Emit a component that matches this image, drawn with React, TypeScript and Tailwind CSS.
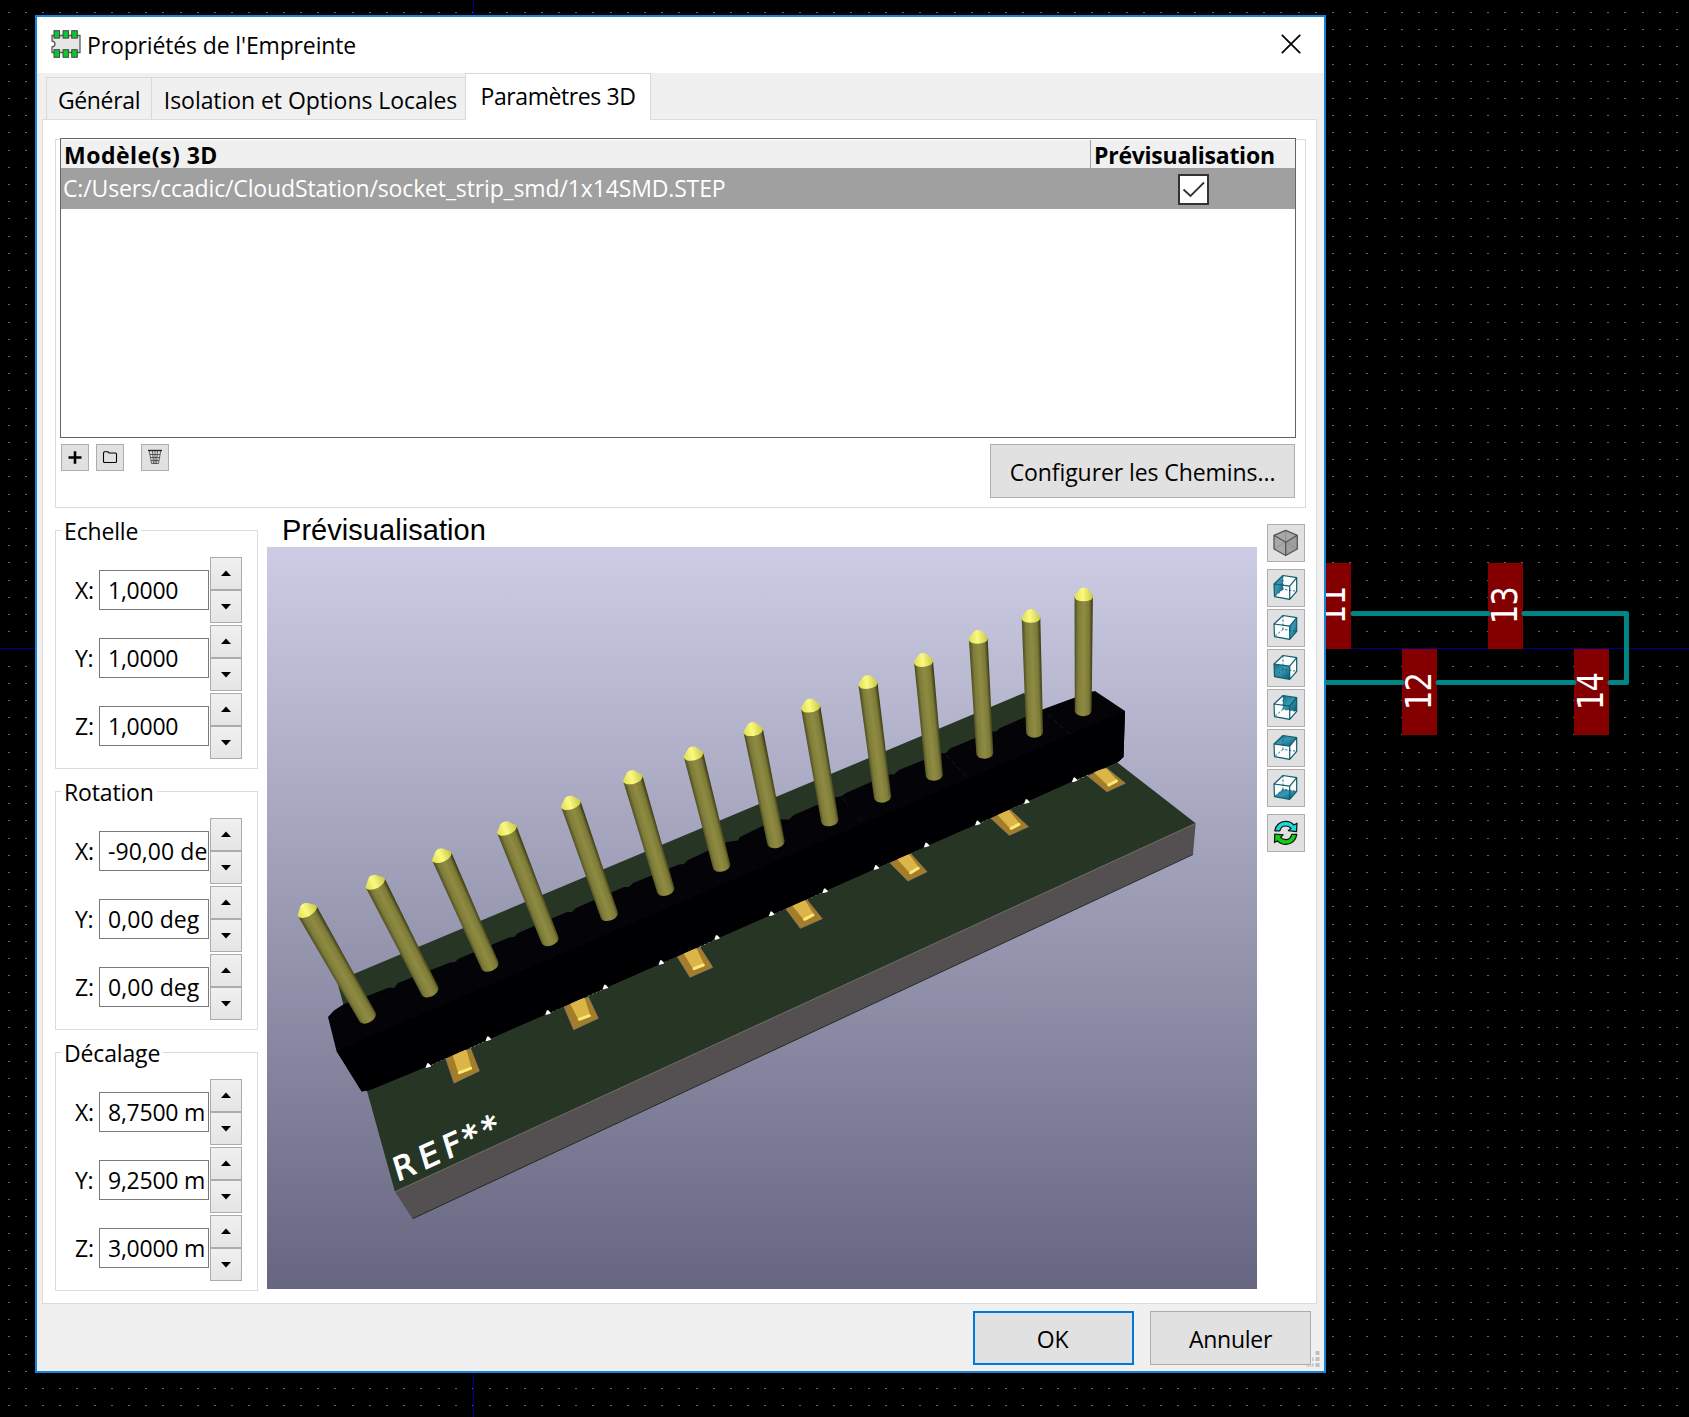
import type { ReactNode } from "react";

const PITCH = 17.2;

function gridDots() {
  let d = "";
  for (let r = 0; r < 83; r++) {
    const y = Math.floor(12.5 + r * PITCH);
    for (let c = 0; c < 99; c++) {
      const x = Math.floor(8 + c * PITCH);
      d += `M${x} ${y}h2v1h-2z`;
    }
  }
  return d;
}

function BoardCanvas() {
  const pads = [
    { x: 1316, y: 563, n: "11" },
    { x: 1402, y: 649, n: "12" },
    { x: 1488, y: 563, n: "13" },
    { x: 1574, y: 649, n: "14" },
  ];
  return (
    <svg className="absolute inset-0" width="1689" height="1417" viewBox="0 0 1689 1417">
      <rect width="1689" height="1417" fill="#000" />
      <path d={gridDots()} fill="#666" />
      <path d="M0 648.5H1689M473.5 0V1417" stroke="#000084" strokeWidth="1" />
      {pads.map((p) => (
        <rect key={p.n} x={p.x} y={p.y} width="35" height="86" fill="#840000" />
      ))}
      <path
        d="M1353 613.5H1488M1524 613.5H1626.5V682.5H1610M1574 682.5H1438M1402 682.5H1320"
        fill="none"
        stroke="#008484"
        strokeWidth="5"
        strokeLinecap="round"
        strokeLinejoin="round"
      />
      {pads.map((p) => (
        <text
          key={p.n}
          transform={`translate(${p.x + 29} ${p.y + 61.5}) rotate(-90)`}
          fontFamily="'DejaVu Sans Mono', monospace"
          fontSize="35"
          textLength="38"
          lengthAdjust="spacingAndGlyphs"
          fill="#fff"
        >
          {p.n}
        </text>
      ))}
    </svg>
  );
}

/* shoulder x, shoulder y, base x, base y */
const PINS = [
  [307.5, 911.5, 367.5, 1017],
  [375.5, 883.5, 430, 991],
  [442, 857, 490, 965.5],
  [507, 830, 550, 940],
  [571, 804.5, 609.3, 915],
  [633, 779, 665.7, 890],
  [693.7, 755.5, 721.6, 866],
  [753.3, 731, 776, 842.5],
  [810.7, 707.5, 829.8, 820.5],
  [868, 684, 882.6, 797],
  [923.6, 662, 934.3, 775],
  [978.3, 639, 984.8, 753],
  [1031, 618, 1034.6, 732],
  [1083.7, 596.5, 1083.2, 710.5],
];

const PADS = [
  ["445.7,1058.3 470.7,1048.7 479.3,1071 454,1083", "453.3,1054 465.7,1050.7 470.7,1068.3 459.3,1072.7"],
  ["564,1006.7 588.3,997 598.3,1018.3 573.7,1029.7", "570.7,1002.7 584,999 589.3,1015.7 579.3,1019.3"],
  ["677.3,956.7 700,947.3 712.7,967.3 690,977.3", "684.3,952.7 696,949.3 703.3,965 694,968.7"],
  ["785.4,908.3 807.2,900 822.2,918.7 800.4,928.3", "792.3,904 804.6,901.3 813,915 804.6,919.3"],
  ["889.9,862.7 911,854 927,871.7 907.9,881", "897.2,857.7 908.7,855.3 918.2,868.3 910.6,872.7"],
  ["990.9,818.3 1010.5,810 1028.4,826.7 1009.3,835.3", "998.2,814 1008.5,811 1018.9,824.3 1011.2,828.3"],
  ["1087.8,776 1106.9,768.3 1125.3,783.3 1106.9,791.7", "1094.7,771.7 1105.7,769.3 1116.5,781 1108.8,785"],
];

const GAPS = [
  [428, 1065.7], [488, 1039], [547.7, 1012.7], [605, 987.3], [661, 962.7], [716.7, 937.7],
  [771.3, 914], [824.8, 891], [876, 867.7], [926.3, 845.3], [977.5, 823.3], [1026.5, 801.7], [1074.4, 780],
];

const HEADER_OUTLINE =
  "328,1017 334,1010.5 344,1004 370,995 389,987.5 394,988 398,983 450,962.5 455,962 459,958.5 509,937.5 514,937 518,933 567,912 572,912 576,908 624,887 629,887 633,883 679,864.5 684,864 688,860 727,842 738,840.5 740,837 776,819.5 789,819.5 794,815 834,797.5 841,796.5 846,793 888,774.5 894,774.5 899,770 940,753.5 946,753 950,748.5 991,731.5 996,731.5 1000,728 1045,708.5 1090,692 1095,691 1125,711 1123.5,757 1118,762 1074,780.5 978,823.5 875,868.5 771,915 717,938 661,963.5 605,988 548,1013.5 488,1039.5 428,1066 370,1090 361.7,1091.5 336.5,1051";

function Pin({ p, index }: { p: number[]; index: number }) {
  const [sx, sy, bx, by] = p;
  const len = Math.hypot(sx - bx, sy - by);
  const angle = (Math.atan2(sx - bx, by - sy) * 180) / Math.PI;
  const t = 10.9 - index * 0.11;
  const b = 9.2 - index * 0.06;
  return (
    <g transform={`translate(${bx} ${by}) rotate(${angle})`}>
      <path d={`M${-t + 0.3} ${-len}L${-b} 0C-8 7.5 8 7.5 ${b} 0L${t - 0.3} ${-len}Z`} fill="url(#pinBody)" />
      <path
        d={`M${-t} ${-len - 1}L-3.6 ${-len - 8}Q0 ${-len - 10} 3.6 ${-len - 8}L${t} ${-len - 1}Q${t} ${-len + 1.5} 7.5 ${-len + 3.2}Q0 ${-len + 6.5} -7.5 ${-len + 3.2}Q${-t} ${-len + 1.5} ${-t} ${-len - 1}Z`}
        fill="url(#pinCap)"
      />
    </g>
  );
}

function Scene() {
  return (
    <svg className="block" width="990" height="742" viewBox="267 547 990 742">
      <defs>
        <linearGradient id="sky" x1="0" y1="0" x2="0" y2="1">
          <stop offset="0" stopColor="#cccce5" />
          <stop offset="1" stopColor="#666680" />
        </linearGradient>
        <linearGradient id="pinBody">
          <stop offset="0" stopColor="#4a4a1e" />
          <stop offset="0.2" stopColor="#7e7c3a" />
          <stop offset="0.5" stopColor="#8f8b42" />
          <stop offset="0.8" stopColor="#7c7a38" />
          <stop offset="1" stopColor="#34340f" />
        </linearGradient>
        <linearGradient id="pinCap">
          <stop offset="0" stopColor="#dedc54" />
          <stop offset="0.45" stopColor="#fafa80" />
          <stop offset="1" stopColor="#c8c648" />
        </linearGradient>
      </defs>
      <rect x="267" y="547" width="990" height="742" fill="url(#sky)" />
      <polygon points="337,981 1024,693 1030,700 1040,712 1118,763 1196,823.5 395,1192 367,1091" fill="#263524" />
      <polygon points="395,1191.7 1195.7,823.3 1193,854.3 412.6,1218.7" fill="#544f50" />
      <path d="M395 1191.7L1195.7 823.3" stroke="#7a7674" strokeWidth="0.8" />
      <path d="M412.6 1218.7L1193 854.5" stroke="#1f2c22" strokeWidth="1" />
      {PADS.map(([pad, chip]) => (
        <g key={pad}>
          <polygon points={pad} fill="#a47d28" stroke="#8a7a70" strokeWidth="0.8" />
          <polygon points={chip} fill="#dcb548" stroke="#dcb548" strokeWidth="2" strokeLinejoin="round" />
          <polyline points={chip.split(" ").slice(2).join(" ")} fill="none" stroke="#fae878" strokeWidth="3" strokeLinecap="round" />
        </g>
      ))}
      <path
        d="M428 1066L446 1058M470 1048L488 1039.7M548 1013.5L564 1006M588 996L605 988M661 963.5L677 956M700 946.5L717 938.5M771 915L786 908M807 899L825 891M875 868.7L890 862M911 853L926 845.5M978 824L991 817.5M1010 809L1026 802M1074 781L1088 775"
        fill="none"
        stroke="#dfe6df"
        strokeWidth="1"
        strokeDasharray="1.5 3"
      />
      <polygon points={HEADER_OUTLINE} fill="#030308" />
      <polygon points="336.5,1051 1125,711 1123.5,757 1118,762 1074,780.5 978,823.5 661,963.5 428,1066 370,1090 361.7,1091.5" fill="#000002" />
      <path d="M946 755L968 778M1048 715L1070 734M843 798L848 806M859 817L863 822" stroke="#111118" strokeWidth="1.2" strokeDasharray="5 3" />
      {GAPS.map(([x, y]) => (
        <path key={x} d={`M${x - 2.5} ${y + 2}L${x - 0.8} ${y - 2.5}H${x + 0.6}L${x + 3} ${y}V${y + 0.8}L${x - 1} ${y + 2}Z`} fill="#fff" />
      ))}
      {PINS.map((p, i) => (
        <Pin key={p[0]} p={p} index={i} />
      ))}
      <text
        transform="matrix(0.913 -0.41 0.29 0.955 399 1181)"
        x="-2 26.5 52.5 74.5 95.5"
        y="0"
        fontFamily="'DejaVu Sans', sans-serif"
        fontSize="32"
        fill="#fff"
        stroke="#fff"
        strokeWidth="1"
      >
        REF**
      </text>
    </svg>
  );
}

const V = {
  ftl: "7,15",
  ftr: "22.7,17.2",
  fbr: "22.7,30.3",
  fbl: "7.5,27.6",
  btl: "16,6.5",
  btr: "29.7,8.7",
  bbr: "29.7,22.3",
  bbl: "16,20.3",
};

const FACES: { name: string; points: string }[] = [
  { name: "left", points: `${V.ftl} ${V.btl} ${V.bbl} ${V.fbl}` },
  { name: "right", points: `${V.ftr} ${V.btr} ${V.bbr} ${V.fbr}` },
  { name: "front", points: `${V.ftl} ${V.ftr} ${V.fbr} ${V.fbl}` },
  { name: "back", points: `${V.btl} ${V.btr} ${V.bbr} ${V.bbl}` },
  { name: "top", points: `${V.ftl} ${V.btl} ${V.btr} ${V.ftr}` },
  { name: "bottom", points: `${V.fbl} ${V.bbl} ${V.bbr} ${V.fbr}` },
];

function ToolButton({ children, label }: { children: ReactNode; label: string }) {
  return (
    <button aria-label={label} className="h-[38px] w-[38px] shrink-0 border border-[#adadad] bg-[#e1e1e1]">
      <svg className="-ml-px -mt-px block" width="38" height="38" viewBox="0 0 38 38">
        {children}
      </svg>
    </button>
  );
}

function ViewToolbar() {
  return (
    <div className="ml-[10px] mt-4 flex w-[38px] flex-col">
      <ToolButton label="iso">
        <path d="M18.7 6.3L30.3 11.3V25L18.7 31.5L7 25V11.3Z" fill="#a8a8a8" />
        <path d="M18.7 18.3L30.3 11.3V25L18.7 31.5Z" fill="#9e9e9e" />
        <path d="M18.7 6.3V18L7 25M18.7 18L30.3 25" fill="none" stroke="#8a8a8a" strokeWidth="0.8" />
        <path d="M18.7 6.3L30.3 11.3V25L18.7 31.5L7 25V11.3ZM7 11.3L18.7 18.3L30.3 11.3M18.7 18.3V31.5" fill="none" stroke="#555" strokeWidth="1.3" strokeLinejoin="round" />
      </ToolButton>
      <div className="mt-[7px] flex flex-col gap-0.5">
        {FACES.map((f) => (
          <ToolButton key={f.name} label={f.name}>
            <defs>
              <linearGradient id={`face-${f.name}`} x1="0" y1="0" x2="1" y2="1">
                <stop offset="0" stopColor="#0f718c" />
                <stop offset="0.45" stopColor="#3a97b2" />
                <stop offset="1" stopColor="#075a74" />
              </linearGradient>
            </defs>
            <polygon points="7,15 16,6.5 29.7,8.7 29.7,22.3 22.7,30.3 7.5,27.6" fill="#fbfdfd" />
            <polygon points={f.points} fill={`url(#face-${f.name})`} />
            <path d="M16 6.5V20.3L29.7 22.3M16 20.3L7.5 27.6" fill="none" stroke="#0f5c6e" strokeWidth="0.9" strokeDasharray="2.2 1.8" />
            <path d="M7 15L16 6.5L29.7 8.7V22.3L22.7 30.3L7.5 27.6ZM7 15L22.7 17.2V30.3M22.7 17.2L29.7 8.7" fill="none" stroke="#0f5c6e" strokeWidth="1.2" strokeLinejoin="round" />
          </ToolButton>
        ))}
      </div>
      <div className="mt-[7px]">
        <ToolButton label="refresh">
          <path d="M7.8 16.8C8.6 11 13 7.4 18.6 7.4C22 7.4 24.9 8.7 27 11L30 9.2L29.5 17.6L21.3 16.6L24 14.2C22.4 12.6 20.8 12 18.6 12C15.6 12 13.6 13.8 12.8 16.8Z" fill="#19dcdc" stroke="#111" strokeWidth="1.2" strokeLinejoin="round" />
          <path d="M29.8 20.4C29 26.4 24.6 30.4 18.8 30.4C15.4 30.4 12.6 29 10.5 26.8L7.5 28.6L7.8 20L16.2 20.8L13.5 23.4C15 25 16.6 25.7 18.8 25.7C21.8 25.7 23.9 23.6 24.7 20.4Z" fill="#10d010" stroke="#111" strokeWidth="1.2" strokeLinejoin="round" />
        </ToolButton>
      </div>
    </div>
  );
}

function SpinRow({ axis, value }: { axis: string; value: string }) {
  return (
    <div className="flex h-[66px] items-center pl-[19px]">
      <span className="w-6 shrink-0 tracking-[-0.3px]">{axis}:</span>
      <div className="flex h-10 w-[110px] shrink-0 items-center border border-[#7a7a7a] bg-white pl-2">
        <span className={value.includes("d") ? "whitespace-nowrap tracking-[0.05px]" : "whitespace-nowrap tracking-[-0.25px]"}>
          {value}
        </span>
      </div>
      <div className="ml-px flex h-[66px] w-8 shrink-0 flex-col">
        {["M11 19H21L16 13.5Z", "M11 14H21L16 19.5Z"].map((d) => (
          <button key={d} aria-label={axis} className="h-[33px] w-8 border border-[#acacac] bg-linear-to-b from-[#f0f0f0] to-[#e5e5e5]">
            <svg className="-ml-px -mt-px block" width="32" height="33" viewBox="0 0 32 33">
              <path d={d} fill="#000" />
            </svg>
          </button>
        ))}
      </div>
    </div>
  );
}

function Group({ title, values }: { title: string; values: string[] }) {
  return (
    <div className="h-[239px] border border-[#dcdcdc]">
      <div className="-mt-[15px] ml-[5px] h-[30px] w-fit bg-white px-[3px] leading-[30px] tracking-[-0.15px]">{title}</div>
      <div className="mt-[11px] flex flex-col gap-0.5">
        {values.map((v, i) => (
          <SpinRow key={i} axis={"XYZ"[i]} value={v} />
        ))}
      </div>
    </div>
  );
}

function SmallButton({ children, label }: { children: ReactNode; label: string }) {
  return (
    <button aria-label={label} className="h-[27px] w-7 border border-[#adadad] bg-[#e1e1e1]">
      <svg className="-ml-px -mt-px block" width="28" height="27" viewBox="0 0 28 27">
        {children}
      </svg>
    </button>
  );
}

export default function App() {
  return (
    <div className="relative h-[1417px] w-[1689px] overflow-hidden bg-black font-['Open_Sans',sans-serif] text-[23px] tracking-[-0.25px] text-black">
      <BoardCanvas />
      <div className="absolute left-[35px] top-[15px] flex h-[1358px] w-[1291px] flex-col border-2 border-[#1883d7] bg-[#f0f0f0]">
        <div className="flex h-14 shrink-0 items-center bg-white pl-[14px]">
          <svg width="30" height="28" viewBox="0 0 30 28" className="-mt-0.5">
            <path d="M1 5.5H29V22.5H1V17Q4 16.5 4 14T1 11Z" fill="#e6e6e6" stroke="#5a5a5a" strokeWidth="1.3" />
            {[3, 12, 20.7].map((x) => (
              <g key={x} fill="#0bc62f" stroke="#444" strokeWidth="1">
                <rect x={x} y="0.7" width="5.6" height="7.4" />
                <rect x={x} y="19.7" width="5.6" height="7.6" />
              </g>
            ))}
          </svg>
          <span className="ml-[6px] tracking-[-0.14px]">Propriétés de l'Empreinte</span>
          <svg width="20" height="20" viewBox="0 0 20 20" className="-mt-0.5 ml-auto mr-[23px]">
            <path d="M0.8 0.8L19.2 19.2M19.2 0.8L0.8 19.2" stroke="#000" strokeWidth="1.7" />
          </svg>
        </div>

        <div className="flex h-[46px] shrink-0 items-end pl-[9px]">
          <div className="flex h-[42px] w-[105px] items-center justify-center border-l border-t border-[#d9d9d9] pt-1 tracking-[-0.35px]">Général</div>
          <div className="flex h-[42px] w-[314px] items-center justify-center border-l border-t border-[#d9d9d9] pl-1 pt-1 tracking-[-0.06px]">
            Isolation et Options Locales
          </div>
          <div className="relative -mb-px flex h-[47px] w-[186px] items-center justify-center border-x border-t border-[#d9d9d9] bg-white pb-px tracking-[-0.4px]">
            Paramètres 3D
          </div>
        </div>

        <div className="ml-[5px] flex h-[1185px] w-[1275px] shrink-0 flex-col border border-[#dcdcdc] bg-white pl-3">
          <div className="mt-[19px] h-[369px] w-[1251px] shrink-0 border border-[#dcdcdc]">
            <div className="-mt-0.5 ml-1 h-[300px] w-[1236px] border border-[#646464] bg-white">
              <div className="mt-px flex h-7 items-start bg-[#f0f0f0] font-bold">
                <div className="w-[1029px] pl-[3px] leading-[30px] tracking-[0.5px]">Modèle(s) 3D</div>
                <div className="h-7 border-l border-[#a0a0a0] pl-[3px] leading-[30px]">Prévisualisation</div>
              </div>
              <div className="flex h-[41px] items-center bg-[#a0a0a0] text-white">
                <div className="w-[1117px] pl-[2px] tracking-[-0.14px]">C:/Users/ccadic/CloudStation/socket_strip_smd/1x14SMD.STEP</div>
                <div className="mt-0.5 h-[31px] w-[31px] border-2 border-[#333] bg-white">
                  <svg width="27" height="27" viewBox="0 0 27 27">
                    <path d="M3.5 13.5L10.5 20L24 6.5" fill="none" stroke="#333" strokeWidth="1.8" />
                  </svg>
                </div>
              </div>
            </div>
            <div className="mt-[6px] flex items-start pl-[5px]">
              <SmallButton label="add">
                <path d="M7.5 13.5H20.5M14 7.2V19.8" stroke="#000" strokeWidth="2.6" />
              </SmallButton>
              <div className="ml-[7px]">
                <SmallButton label="open">
                  <path d="M7.5 9.5V17.5Q7.5 18.5 8.5 18.5H19.5Q20.5 18.5 20.5 17.5V10Q20.5 9 19.5 9H13L12 7.8H8.5Q7.5 7.8 7.5 9.5Z" fill="none" stroke="#000" strokeWidth="1.1" />
                </SmallButton>
              </div>
              <div className="ml-[17px]">
                <SmallButton label="delete">
                  <path d="M7 6.5H21" stroke="#222" strokeWidth="1.4" />
                  <path d="M8.3 7L10.5 19.5H17.5L19.7 7M11.5 7L12.5 19.5M14 7V19.5M16.5 7L15.5 19.5M8.8 10.5H19.2M9.5 13.5H18.5M10 16.5H18" fill="none" stroke="#3a3a3a" strokeWidth="0.75" />
                </SmallButton>
              </div>
              <button className="ml-auto mr-[10px] h-[54px] w-[305px] border border-[#adadad] bg-[#e1e1e1] pt-0.5 tracking-[-0.08px]">
                Configurer les Chemins...
              </button>
            </div>
          </div>

          <div className="flex">
            <div className="mt-[22px] flex w-[203px] flex-col gap-[22px]">
              <Group title="Echelle" values={["1,0000", "1,0000", "1,0000"]} />
              <Group title="Rotation" values={["-90,00 de", "0,00 deg", "0,00 deg"]} />
              <Group title="Décalage" values={["8,7500 m", "9,2500 m", "3,0000 m"]} />
            </div>
            <div className="ml-[9px] w-[990px]">
              <div className="h-[39px] pl-[15px] font-['Liberation_Sans',Arial,sans-serif] text-[29px] leading-[45px] tracking-[0.05px]">Prévisualisation</div>
              <Scene />
            </div>
            <ViewToolbar />
          </div>
        </div>

        <div className="mt-[7px] flex pl-[936px]">
          <button className="h-[54px] w-[161px] border-2 border-[#0078d7] bg-[#e1e1e1] pr-0.5 pt-0.5">OK</button>
          <button className="ml-4 h-[54px] w-[161px] border border-[#adadad] bg-[#e1e1e1] pt-0.5">Annuler</button>
          <svg className="-ml-2 mt-[39px]" width="17" height="17" viewBox="0 0 17 17">
            <path d="M12.5 1h4v4h-4zM12.5 7h4v4h-4zM12.5 13h4v4h-4zM9 7.5h1.5v3.5H9zM9 13.5h1.5v3H9zM3 15.5h6v1H3z" fill="#bfbfbf" />
          </svg>
        </div>
      </div>
    </div>
  );
}
